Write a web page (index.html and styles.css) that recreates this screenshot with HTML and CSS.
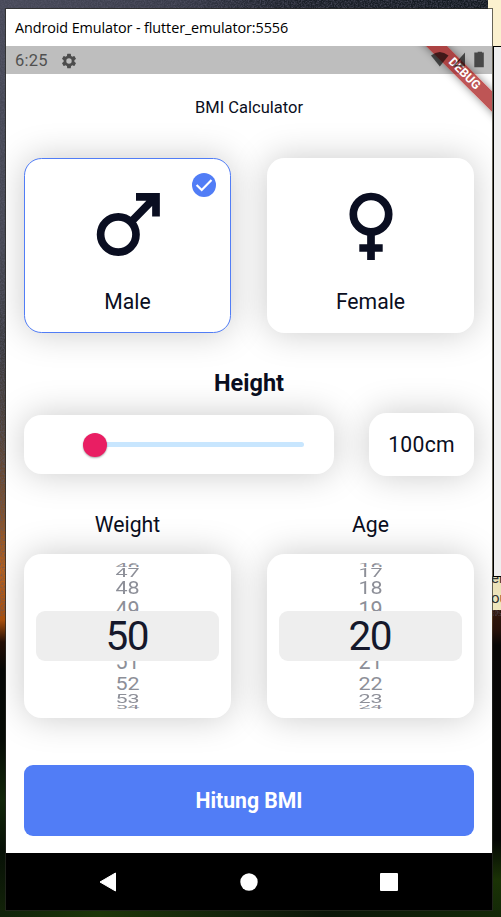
FILE: index.html
```html
<!DOCTYPE html>
<html lang="id">
<head>
<meta charset="utf-8">
<title>BMI Calculator</title>
<link rel="stylesheet" href="styles.css">
</head>
<body>
<svg class="grain" width="501" height="917" aria-hidden="true">
  <filter id="noise"><feTurbulence type="fractalNoise" baseFrequency="0.7" numOctaves="2" seed="4"/><feColorMatrix values="0 0 0 0 .1  0 0 0 0 .1  0 0 0 0 .15  2.5 0 0 0 -.9"/></filter>
  <rect width="501" height="560" filter="url(#noise)"/>
</svg>
<div class="note"><span class="note-text">er<br>ou</span></div>
<div class="back-window"></div>

<div class="window">
  <div class="titlebar">Android Emulator - flutter_emulator:5556</div>
  <div class="screen">
    <div class="statusbar">
      <span class="clock">6:25</span>
      <svg class="gear" viewBox="0 0 24 24"><path d="M19.14 12.94c.04-.3.06-.61.06-.94s-.02-.64-.07-.94l2.03-1.58a.49.49 0 0 0 .12-.61l-1.92-3.32a.49.49 0 0 0-.59-.22l-2.39.96a7 7 0 0 0-1.62-.94l-.36-2.54a.48.48 0 0 0-.48-.41h-3.84a.47.47 0 0 0-.47.41l-.36 2.54c-.59.24-1.13.57-1.62.94l-2.39-.96a.48.48 0 0 0-.59.22L2.74 8.87a.48.48 0 0 0 .12.61l2.03 1.58c-.05.3-.09.63-.09.94s.02.64.07.94l-2.03 1.58a.49.49 0 0 0-.12.61l1.92 3.32c.12.22.37.29.59.22l2.39-.96c.5.38 1.03.7 1.62.94l.36 2.54c.05.24.24.41.48.41h3.84c.24 0 .44-.17.47-.41l.36-2.54a6.7 6.7 0 0 0 1.62-.94l2.39.96c.22.08.47 0 .59-.22l1.92-3.32a.48.48 0 0 0-.12-.61zM12 15.6A3.6 3.6 0 1 1 12 8.4a3.6 3.6 0 0 1 0 7.2z"/></svg>
      <svg class="signals" width="54" height="28" viewBox="0 0 54 28"><path d="M0 9.500Q8.800 2.500 17.500 9.500L8.800 20.500Z"/><path fill-rule="evenodd" d="M34 6.500V20.500H21.500ZM32.500 10.500L25 19H29.500V14L32.500 10.500Z"/><path d="M44.500 6.500h2.200V5.700h4.300v.8h1.800v14.700h-9.500V6.500Z"/></svg>
    </div>
    <div class="ribbon"><span>DEBUG</span></div>

    <main class="page">
      <h1 class="title">BMI Calculator</h1>
      <div class="pair genders">
        <div class="card gender selected">
          <svg class="check" width="24" height="24" viewBox="0 0 24 24"><circle cx="12" cy="12" r="12"/><path d="M4.600 12L9.700 17L19.500 7"/></svg>
          <svg class="sign" width="70" height="70" viewBox="0 0 70 70"><circle cx="25.300" cy="43.500" r="17.700"/><path d="M38 31L60.500 8M43 5.800H63V25.500"/></svg>
          <span>Male</span>
        </div>
        <div class="card gender">
          <svg class="sign" width="70" height="70" viewBox="0 0 70 70"><circle cx="35" cy="23.200" r="17.700"/><path d="M35 41V69M23.300 57H46.700"/></svg>
          <span>Female</span>
        </div>
      </div>

      <h2 class="height-title">Height</h2>
      <div class="height-row">
        <div class="card slider"><div class="track"><div class="thumb"></div></div></div>
        <div class="card height-value">100cm</div>
      </div>

      <div class="pair labels"><span>Weight</span><span>Age</span></div>
      <div class="pair">
        <div class="card wheel">
          <div class="row r4 top"><span>46</span></div>
          <div class="row r3"><span>47</span></div>
          <div class="row r2"><span>48</span></div>
          <div class="row r1 before"><span>49</span></div>
          <div class="current">50</div>
          <div class="row r1 after"><span>51</span></div>
          <div class="row r2 low"><span>52</span></div>
          <div class="row r3"><span>53</span></div>
          <div class="row r4 bottom"><span>54</span></div>
        </div>
        <div class="card wheel">
          <div class="row r4 top"><span>16</span></div>
          <div class="row r3"><span>17</span></div>
          <div class="row r2"><span>18</span></div>
          <div class="row r1 before"><span>19</span></div>
          <div class="current">20</div>
          <div class="row r1 after"><span>21</span></div>
          <div class="row r2 low"><span>22</span></div>
          <div class="row r3"><span>23</span></div>
          <div class="row r4 bottom"><span>24</span></div>
        </div>
      </div>
      <button class="submit">Hitung BMI</button>
    </main>

    <nav class="navbar">
      <svg width="20" height="20" viewBox="0 0 20 20"><path d="M2 10L17.500 1V19Z" stroke="#fff" stroke-linejoin="round"/></svg>
      <svg width="20" height="20" viewBox="0 0 20 20"><circle cx="10" cy="10" r="8.700"/></svg>
      <svg width="20" height="20" viewBox="0 0 20 20"><rect x="1" y="1" width="18" height="18" rx="1"/></svg>
    </nav>
  </div>
</div>
</body>
</html>
```
FILE: styles.css
```css
* { box-sizing: border-box; }

body {
  margin: 0;
  width: 501px;
  height: 917px;
  overflow: hidden;
  position: relative;
  padding: 9px 0 0 6px;
  font-family: Roboto, sans-serif;
  color: #0a0e21;
  background:
    linear-gradient(90deg, #10220a, #1d3508 20%, #14240b 45%, #0b1508 65%, #142808) 0 911px / 501px 6px no-repeat,
    linear-gradient(90deg, #484a59, #383b49 35%, #1b2028 60%, #11181e) 0 0 / 501px 9px no-repeat,
    linear-gradient(#32170c 610px, #26110a 630px, #080706 645px, #040604 840px, #1b3306 880px, #132808) 493px 0 / 8px 917px no-repeat,
    linear-gradient(#484a59, #464853 250px, #3b3b3e 350px, #504238 430px, #80502a 510px, #bd6117 570px, #a84f0d 620px, #240f06 642px, #050705 670px, #060b05 740px, #12270a 800px, #071006 850px, #132409 917px);
}

.grain { position: absolute; left: 0; top: 0; opacity: .6; }

.note {
  position: absolute;
  left: 488px;
  top: 0;
  width: 13px;
  height: 610px;
  padding: 568px 0 0 3px;
  overflow: hidden;
  background: linear-gradient(#fbf1cf 46px, #e9dfb7 570px, #f0e7bd);
}

.note-text { display: block; font-size: 15px; line-height: 20px; color: #333; }

.back-window {
  position: absolute;
  left: 493px;
  top: 46px;
  width: 10px;
  height: 531px;
  background: #efefef;
  border: 1px solid #000;
}

.window {
  position: relative;
  width: 486px;
  height: 901px;
  background: #fff;
  box-shadow: 0 0 0 1px rgba(40, 40, 35, .7);
}

.titlebar {
  height: 37px;
  padding-left: 9px;
  font: 14.4px/37px "Open Sans", "Noto Sans", sans-serif;
  letter-spacing: -.1px;
  color: #000;
}

.screen { position: relative; overflow: hidden; height: 864px; }

.statusbar {
  height: 28px;
  display: flex;
  align-items: center;
  padding: 1px 7px 0 9px;
  background: #bebebe;
}

.clock { width: 45px; font-size: 16.500px; letter-spacing: .2px; color: #505050; }
.gear { width: 18px; height: 18px; fill: #4c4c4c; }
.signals { position: relative; z-index: 1; margin: -1px 0 0 auto; fill: rgba(0, 0, 0, .62); }

.ribbon {
  position: absolute;
  left: 391px;
  top: 20px;
  width: 134px;
  height: 15px;
  transform: rotate(45deg);
  background: rgba(165, 20, 20, .72);
  box-shadow: 0 0 9px rgba(0, 0, 0, .45);
  padding-left: 1px;
  text-align: center;
  font-weight: 700;
  font-size: 12.200px;
  line-height: 15px;
  color: #fff;
}

.page { height: 779px; padding: 0 18px; display: flex; flex-direction: column; }

.title { height: 84px; margin: 0; text-align: center; font-size: 16.500px; font-weight: 400; line-height: 68px; }

.pair { display: grid; grid-template-columns: 207px 207px; gap: 36px; }

.card { background: #fff; border-radius: 17.500px; box-shadow: 0 0 35px rgba(0, 0, 0, .21); }

.gender {
  position: relative;
  height: 175px;
  display: flex;
  flex-direction: column;
  align-items: center;
  padding-top: 32px;
  border: 1px solid transparent;
  font-size: 21.200px;
}

.selected { border-color: #517df6; }
.gender span { margin-top: 28px; line-height: 25px; }
.sign { fill: none; stroke: #0a0e21; stroke-width: 7.700px; }
.check { position: absolute; right: 14px; top: 14px; fill: #517df6; }
.check path { fill: none; stroke: #fff; stroke-width: 2.200px; }

.height-title { height: 80px; margin: 0; text-align: center; font-size: 23.500px; line-height: 101px; }

.height-row { height: 63px; display: flex; align-items: center; justify-content: space-between; }
.slider { width: 310px; height: 59px; display: flex; align-items: center; padding: 0 30px 0 71px; }
.track { width: 100%; height: 5px; border-radius: 3px; background: #c8e6fe; display: flex; align-items: center; }
.thumb { width: 24px; height: 24px; margin-left: -12px; flex: none; border-radius: 50%; background: #e91e63; box-shadow: 0 1px 2px rgba(0, 0, 0, .35); }
.height-value { width: 105px; height: 63px; text-align: center; font-size: 21.200px; line-height: 64px; letter-spacing: .25px; }

.labels { height: 78px; text-align: center; font-size: 21.200px; line-height: 97px; }

.wheel { height: 164px; padding: 9px 12px; }
.row { overflow: hidden; display: flex; justify-content: center; align-items: center; font-size: 21.500px; color: #8d8f98; }
.row span { flex: none; line-height: 24px; }
.r1 { height: 15px; }
.r2 { height: 17px; }
.r3 { height: 12px; }
.r4 { height: 4px; }
.r2 span { transform: scaleY(.85); }
.r2.low span { transform: translateY(-1px) scaleY(.85); }
.r3 span { transform: scaleY(.58); }
.r4.top span { transform: translateY(1px) scaleY(.3); }
.r4.bottom span { transform: translateY(-.5px) scaleY(.3); }
.before span { transform: translateY(6px); }
.after span { transform: translateY(-7.500px); }

.current {
  height: 50px;
  border-radius: 9px;
  background: #eee;
  text-align: center;
  font-size: 40.500px;
  line-height: 50px;
  letter-spacing: -1.500px;
  text-indent: -1.500px;
  color: #15182b;
}

.submit {
  flex: none;
  height: 70.500px;
  margin: 47px 0 0;
  padding: 0;
  border: 0;
  border-radius: 9px;
  background: #517df6;
  color: #fff;
  font: 700 21.200px Roboto, sans-serif;
}

.navbar {
  height: 57px;
  display: flex;
  align-items: center;
  justify-content: space-between;
  padding: 0 93px 0 92px;
  background: #000;
}
.navbar svg { fill: #fff; }
```
